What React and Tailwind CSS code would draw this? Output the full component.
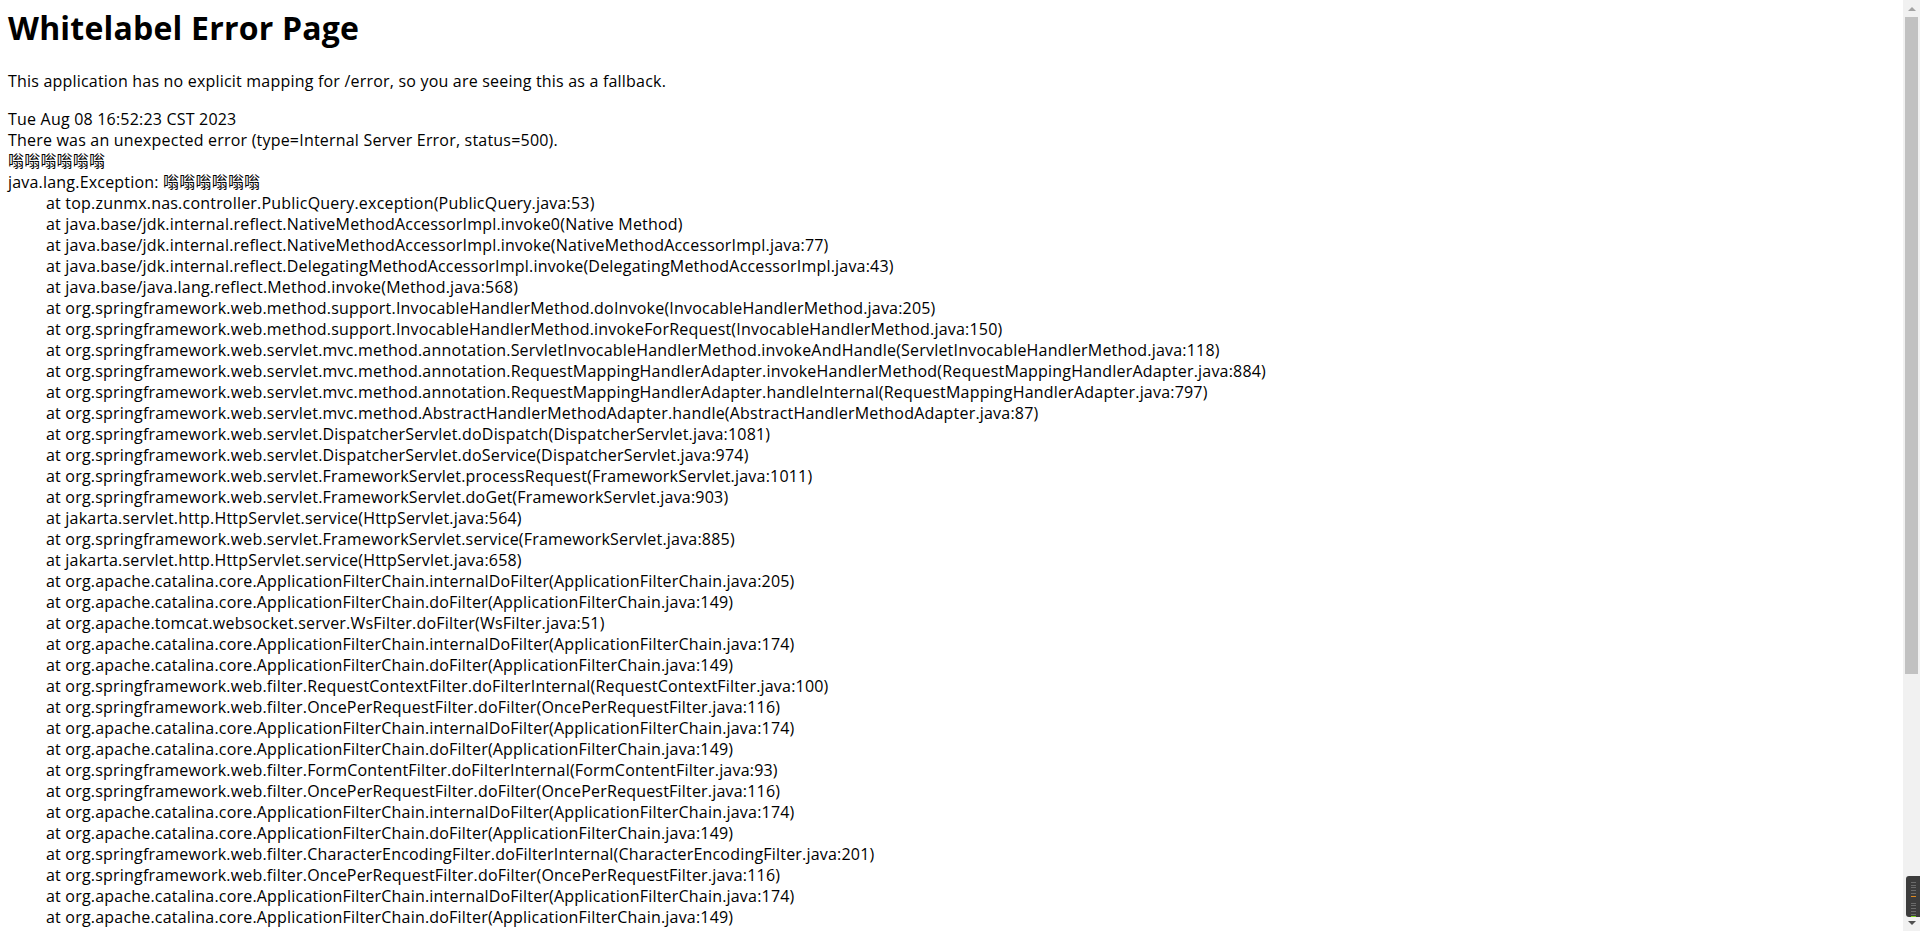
import React from 'react';

const trace = [
  'top.zunmx.nas.controller.PublicQuery.exception(PublicQuery.java:53)',
  'java.base/jdk.internal.reflect.NativeMethodAccessorImpl.invoke0(Native Method)',
  'java.base/jdk.internal.reflect.NativeMethodAccessorImpl.invoke(NativeMethodAccessorImpl.java:77)',
  'java.base/jdk.internal.reflect.DelegatingMethodAccessorImpl.invoke(DelegatingMethodAccessorImpl.java:43)',
  'java.base/java.lang.reflect.Method.invoke(Method.java:568)',
  'org.springframework.web.method.support.InvocableHandlerMethod.doInvoke(InvocableHandlerMethod.java:205)',
  'org.springframework.web.method.support.InvocableHandlerMethod.invokeForRequest(InvocableHandlerMethod.java:150)',
  'org.springframework.web.servlet.mvc.method.annotation.ServletInvocableHandlerMethod.invokeAndHandle(ServletInvocableHandlerMethod.java:118)',
  'org.springframework.web.servlet.mvc.method.annotation.RequestMappingHandlerAdapter.invokeHandlerMethod(RequestMappingHandlerAdapter.java:884)',
  'org.springframework.web.servlet.mvc.method.annotation.RequestMappingHandlerAdapter.handleInternal(RequestMappingHandlerAdapter.java:797)',
  'org.springframework.web.servlet.mvc.method.AbstractHandlerMethodAdapter.handle(AbstractHandlerMethodAdapter.java:87)',
  'org.springframework.web.servlet.DispatcherServlet.doDispatch(DispatcherServlet.java:1081)',
  'org.springframework.web.servlet.DispatcherServlet.doService(DispatcherServlet.java:974)',
  'org.springframework.web.servlet.FrameworkServlet.processRequest(FrameworkServlet.java:1011)',
  'org.springframework.web.servlet.FrameworkServlet.doGet(FrameworkServlet.java:903)',
  'jakarta.servlet.http.HttpServlet.service(HttpServlet.java:564)',
  'org.springframework.web.servlet.FrameworkServlet.service(FrameworkServlet.java:885)',
  'jakarta.servlet.http.HttpServlet.service(HttpServlet.java:658)',
  'org.apache.catalina.core.ApplicationFilterChain.internalDoFilter(ApplicationFilterChain.java:205)',
  'org.apache.catalina.core.ApplicationFilterChain.doFilter(ApplicationFilterChain.java:149)',
  'org.apache.tomcat.websocket.server.WsFilter.doFilter(WsFilter.java:51)',
  'org.apache.catalina.core.ApplicationFilterChain.internalDoFilter(ApplicationFilterChain.java:174)',
  'org.apache.catalina.core.ApplicationFilterChain.doFilter(ApplicationFilterChain.java:149)',
  'org.springframework.web.filter.RequestContextFilter.doFilterInternal(RequestContextFilter.java:100)',
  'org.springframework.web.filter.OncePerRequestFilter.doFilter(OncePerRequestFilter.java:116)',
  'org.apache.catalina.core.ApplicationFilterChain.internalDoFilter(ApplicationFilterChain.java:174)',
  'org.apache.catalina.core.ApplicationFilterChain.doFilter(ApplicationFilterChain.java:149)',
  'org.springframework.web.filter.FormContentFilter.doFilterInternal(FormContentFilter.java:93)',
  'org.springframework.web.filter.OncePerRequestFilter.doFilter(OncePerRequestFilter.java:116)',
  'org.apache.catalina.core.ApplicationFilterChain.internalDoFilter(ApplicationFilterChain.java:174)',
  'org.apache.catalina.core.ApplicationFilterChain.doFilter(ApplicationFilterChain.java:149)',
  'org.springframework.web.filter.CharacterEncodingFilter.doFilterInternal(CharacterEncodingFilter.java:201)',
  'org.springframework.web.filter.OncePerRequestFilter.doFilter(OncePerRequestFilter.java:116)',
  'org.apache.catalina.core.ApplicationFilterChain.internalDoFilter(ApplicationFilterChain.java:174)',
  'org.apache.catalina.core.ApplicationFilterChain.doFilter(ApplicationFilterChain.java:149)',
];

const Scrollbar = () => (
  <div className="w-[17px] shrink-0 h-full bg-[#f1f1f1] flex flex-col items-center">
    <div className="h-[17px] flex items-center justify-center">
      <div className="w-0 h-0 border-l-[4px] border-r-[4px] border-b-[4px] border-l-transparent border-r-transparent border-b-[#a3a3a3]" />
    </div>
    <div className="w-[13px] h-[657px] bg-[#c1c1c1]" />
    <div className="flex-1" />
    <div className="self-end w-[14px] h-[41px] bg-[#3c3c3c] rounded-l-[3px] flex flex-col items-center pt-[6px] gap-[2px]">
      {[0, 1, 2, 3, 4, 5].map((i) => (
        <div key={i} className={`w-[5px] h-px ${i === 5 ? 'bg-[#e08a1e]' : 'bg-[#6a6a6a]'}`} />
      ))}
      <div className="h-[3px]" />
      {[0, 1, 2, 3, 4, 5].map((i) => (
        <div key={i} className={`w-[5px] h-px ${i === 5 ? 'bg-[#7ed321]' : 'bg-[#6a6a6a]'}`} />
      ))}
    </div>
    <div className="h-[14px] flex items-start justify-center pt-[4px]">
      <div className="w-0 h-0 border-l-[4px] border-r-[4px] border-t-[4px] border-l-transparent border-r-transparent border-t-[#505050]" />
    </div>
  </div>
);

export default function App() {
  return (
    <div
      className="flex h-[931px] w-full overflow-hidden bg-white text-black"
      style={{ fontFamily: '"Open Sans", "Noto Sans CJK SC", sans-serif' }}
    >
      <div className="flex-1 min-w-0 px-2 pt-[7px] overflow-hidden">
        <h1 className="text-[32px] leading-[42px] font-bold tracking-[0.2px]">Whitelabel Error Page</h1>
        <p className="mt-[22px] text-[16px] leading-[21px] tracking-[0.2px]">
          This application has no explicit mapping for /error, so you are seeing this as a fallback.
        </p>
        <div className="mt-[17px] text-[16px] leading-[21px] tracking-[0.2px]">
          <div>Tue Aug 08 16:52:23 CST 2023</div>
          <div>There was an unexpected error (type=Internal Server Error, status=500).</div>
          <div className="whitespace-pre-wrap">
            <div>嗡嗡嗡嗡嗡嗡</div>
            <div>java.lang.Exception: 嗡嗡嗡嗡嗡嗡</div>
            {trace.map((line, idx) => (
              <div key={idx} className="pl-[38px]">at {line}</div>
            ))}
          </div>
        </div>
      </div>
      <Scrollbar />
    </div>
  );
}
